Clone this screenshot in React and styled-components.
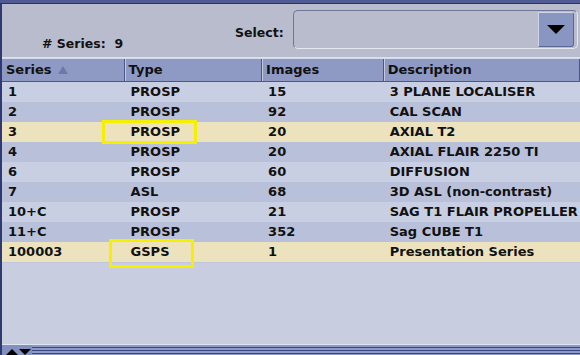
import React from "react";
import styled, { createGlobalStyle } from "styled-components";

const GlobalStyle = createGlobalStyle`
  html, body {
    margin: 0;
    padding: 0;
    background: #c8cde0;
  }
  body {
    font-family: "DejaVu Sans", "Liberation Sans", sans-serif;
  }
`;

const columns = [
  { key: "series", label: "Series", width: 123, sorted: true },
  { key: "type", label: "Type", width: 138 },
  { key: "images", label: "Images", width: 122 },
  { key: "desc", label: "Description", width: 197 },
];

const rows = [
  { series: "1", type: "PROSP", images: "15", desc: "3 PLANE LOCALISER" },
  { series: "2", type: "PROSP", images: "92", desc: "CAL SCAN" },
  { series: "3", type: "PROSP", images: "20", desc: "AXIAL T2", selected: true, mark: { left: -23, top: -2, width: 95, height: 24 } },
  { series: "4", type: "PROSP", images: "20", desc: "AXIAL FLAIR 2250 TI" },
  { series: "6", type: "PROSP", images: "60", desc: "DIFFUSION" },
  { series: "7", type: "ASL", images: "68", desc: "3D ASL (non-contrast)" },
  { series: "10+C", type: "PROSP", images: "21", desc: "SAG T1 FLAIR PROPELLER" },
  { series: "11+C", type: "PROSP", images: "352", desc: "Sag CUBE T1" },
  { series: "100003", type: "GSPS", images: "1", desc: "Presentation Series", selected: true, mark: { left: -16, top: -3, width: 85, height: 29 } },
];

const App = () => {
  return (
    <>
      <GlobalStyle />
      <Window>
        <TopStrip />
        <Frame>
          <InfoPanel>
            <Count>
              # Series:&nbsp;&nbsp;9
            </Count>
            <SelectLabel>Select:</SelectLabel>
            <SelectBox>
              <DropButton>
                <svg width="20" height="11" viewBox="0 0 20 11">
                  <path d="M1 1 L19 1 L10 10 Z" fill="#000" />
                </svg>
              </DropButton>
            </SelectBox>
          </InfoPanel>
          <Table>
            <HeaderRow>
              {columns.map((c) => (
                <HeaderCell key={c.key} $w={c.width}>
                  {c.label}
                  {c.sorted && (
                    <SortArrow width="10" height="9" viewBox="0 0 10 9">
                      <path d="M0 9 L5 1 L10 9 Z" fill="#6d79a8" />
                    </SortArrow>
                  )}
                </HeaderCell>
              ))}
            </HeaderRow>
            {rows.map((r, i) => (
              <Row key={r.series} $odd={i % 2 === 1} $selected={r.selected}>
                {columns.map((c) => (
                  <Cell key={c.key} $w={c.width}>
                    {r[c.key]}
                    {c.key === "type" && r.mark && (
                      <Marker
                        style={{
                          left: r.mark.left,
                          top: r.mark.top,
                          width: r.mark.width,
                          height: r.mark.height,
                        }}
                      />
                    )}
                  </Cell>
                ))}
              </Row>
            ))}
            <Filler />
          </Table>
          <Splitter>
            <Arrows>
              <svg width="28" height="8" viewBox="0 0 28 8">
                <path d="M2 8 L8 2 L14 8 Z" fill="#000" />
                <path d="M15 2 L27 2 L21 8 Z" fill="#000" />
              </svg>
            </Arrows>
            <Stripes />
          </Splitter>
        </Frame>
      </Window>
    </>
  );
};

export default App;

const Window = styled.div`
  width: 580px;
  height: 355px;
  display: flex;
  flex-direction: column;
  overflow: hidden;
  color: #111;
`;

const TopStrip = styled.div`
  height: 3px;
  background: #4f5b92;
  border-bottom: 1px solid #2a3266;
`;

const Frame = styled.div`
  flex: 1;
  display: flex;
  flex-direction: column;
  border-left: 2px solid #2f3a72;
  min-height: 0;
`;

const InfoPanel = styled.div`
  height: 54px;
  background: #b9bccc;
  display: flex;
  align-items: flex-start;
  box-sizing: border-box;
  border-bottom: 1px solid #dfe2ec;
`;

const Count = styled.div`
  width: 233px;
  padding: 32px 0 0 40px;
  box-sizing: border-box;
  font-size: 12.5px;
  font-weight: bold;
`;

const SelectLabel = styled.div`
  width: 58px;
  padding-top: 21px;
  font-size: 12.5px;
  font-weight: bold;
`;

const SelectBox = styled.div`
  margin-top: 6px;
  width: 285px;
  height: 39px;
  box-sizing: border-box;
  border: 1px solid #6f7696;
  border-right-color: #e6e8f0;
  border-bottom-color: #e6e8f0;
  border-radius: 5px;
  background: #b9bccc;
  display: flex;
  justify-content: flex-end;
  align-items: center;
  padding-right: 3px;
`;

const DropButton = styled.div`
  width: 36px;
  height: 35px;
  box-sizing: border-box;
  background: #8a96c2;
  border: 1px solid #5d6796;
  border-top-color: #cfd4e6;
  border-left-color: #cfd4e6;
  border-radius: 0 3px 3px 0;
  display: flex;
  align-items: center;
  justify-content: center;
`;

const Table = styled.div`
  flex: 1;
  display: flex;
  flex-direction: column;
  background: #c8cde0;
  min-height: 0;
`;

const HeaderRow = styled.div`
  display: flex;
  height: 24px;
  background: #8e9ac4;
  border-top: 1px solid #d3d8ea;
  border-bottom: 1px solid #4c5688;
  box-sizing: border-box;
`;

const HeaderCell = styled.div`
  width: ${(p) => p.$w}px;
  box-sizing: border-box;
  padding: 3px 0 0 4px;
  font-size: 13px;
  font-weight: bold;
  white-space: nowrap;
  border-right: 1px solid #4c5688;
  box-shadow: inset 1px 0 0 #c4cae2;

  &:first-child {
    box-shadow: none;
  }
`;

const SortArrow = styled.svg`
  margin-left: 6px;
  vertical-align: 0;
`;

const Row = styled.div`
  display: flex;
  height: 20px;
  background: ${(p) =>
    p.$selected ? "#ece3be" : p.$odd ? "#b9c0da" : "#c9cfe2"};
`;

const Cell = styled.div`
  position: relative;
  width: ${(p) => p.$w}px;
  box-sizing: border-box;
  padding: 3px 0 0 6px;
  font-size: 13px;
  font-weight: bold;
  white-space: nowrap;
  line-height: 14px;
`;

const Marker = styled.div`
  position: absolute;
  box-sizing: border-box;
  border: 3px solid #f6f000;
  pointer-events: none;
`;

const Filler = styled.div`
  flex: 1;
  border-top: 1px solid #c0c6dc;
`;

const Splitter = styled.div`
  height: 10px;
  display: flex;
  background: #4d5a92;
  border-top: 1px solid #e2e6f2;
`;

const Arrows = styled.div`
  width: 28px;
  display: flex;
  align-items: flex-end;
  background: #8290c0;
  padding-left: 2px;
`;

const Stripes = styled.div`
  flex: 1;
  background: repeating-linear-gradient(
    to bottom,
    #8e9ac8 0px,
    #8e9ac8 2px,
    #3a4680 2px,
    #3a4680 3px
  );
`;
